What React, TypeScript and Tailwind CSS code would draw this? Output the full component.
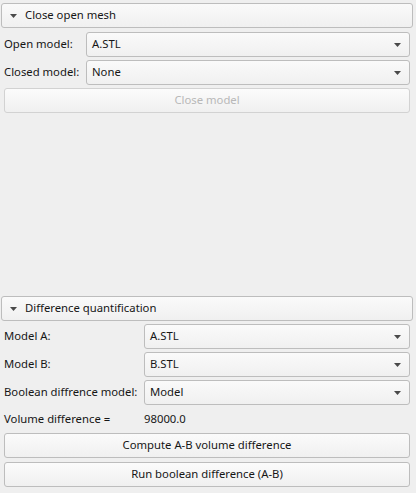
const Arrow = () => (
  <svg width="7" height="4" viewBox="0 0 7 4" className="shrink-0">
    <path d="M0 0 H7 L3.5 4 Z" fill="#4a4a4a" />
  </svg>
);

function Header({ title }: { title: string }) {
  return (
    <div className="mx-[1px] h-[25px] w-[412px] flex items-center gap-[8px] pl-[8px] rounded-[3px] border border-[#bdbdbd] bg-gradient-to-b from-[#fafafa] to-[#f0f0f0]">
      <Arrow />
      <span>{title}</span>
    </div>
  );
}

function Combo({ value }: { value: string }) {
  return (
    <div className="flex-1 h-[25px] flex items-center justify-between pl-[5px] pr-[8px] rounded-[3px] border border-[#bdbdbd] bg-gradient-to-b from-[#fafafa] to-[#f0f0f0]">
      <span>{value}</span>
      <Arrow />
    </div>
  );
}

function Row({ label, value, labelW }: { label: string; value: string; labelW: string }) {
  return (
    <div className="flex items-center h-[25px]">
      <span className={labelW + " shrink-0 whitespace-nowrap"}>{label}</span>
      <Combo value={value} />
    </div>
  );
}

function Button({ label, disabled }: { label: string; disabled?: boolean }) {
  return (
    <div
      className={
        "h-[25px] flex items-center justify-center rounded-[3px] border bg-gradient-to-b from-[#fbfbfb] to-[#f0f0f0] " +
        (disabled ? "border-[#d2d2d2] text-[#b8b8b8]" : "border-[#bdbdbd]")
      }
    >
      {label}
    </div>
  );
}

export default function App() {
  return (
    <div className="w-[416px] h-[493px] bg-[#efefef] text-[#161616] text-[11.3px] flex flex-col pt-[3px] overflow-hidden" style={{ fontFamily: '"Noto Sans", sans-serif' }}>
      <Header title="Close open mesh" />
      <div className="flex flex-col gap-[3px] mt-[4px] ml-[4px] w-[406px]">
        <Row label="Open model:" value="A.STL" labelW="w-[82px]" />
        <Row label="Closed model:" value="None" labelW="w-[82px]" />
        <Button label="Close model" disabled />
      </div>

      <div className="flex-1" />

      <Header title="Difference quantification" />
      <div className="flex flex-col gap-[3px] mt-[3px] ml-[4px] w-[406px] mb-[6px]">
        <Row label="Model A:" value="A.STL" labelW="w-[140px]" />
        <Row label="Model B:" value="B.STL" labelW="w-[140px]" />
        <Row label="Boolean diffrence model:" value="Model" labelW="w-[140px]" />
        <div className="flex items-center h-[22px]">
          <span className="w-[140px]">Volume difference =</span>
          <span>98000.0</span>
        </div>
        <Button label="Compute A-B volume difference" />
        <div className="mt-[1px]">
          <Button label="Run boolean difference (A-B)" />
        </div>
      </div>
    </div>
  );
}
